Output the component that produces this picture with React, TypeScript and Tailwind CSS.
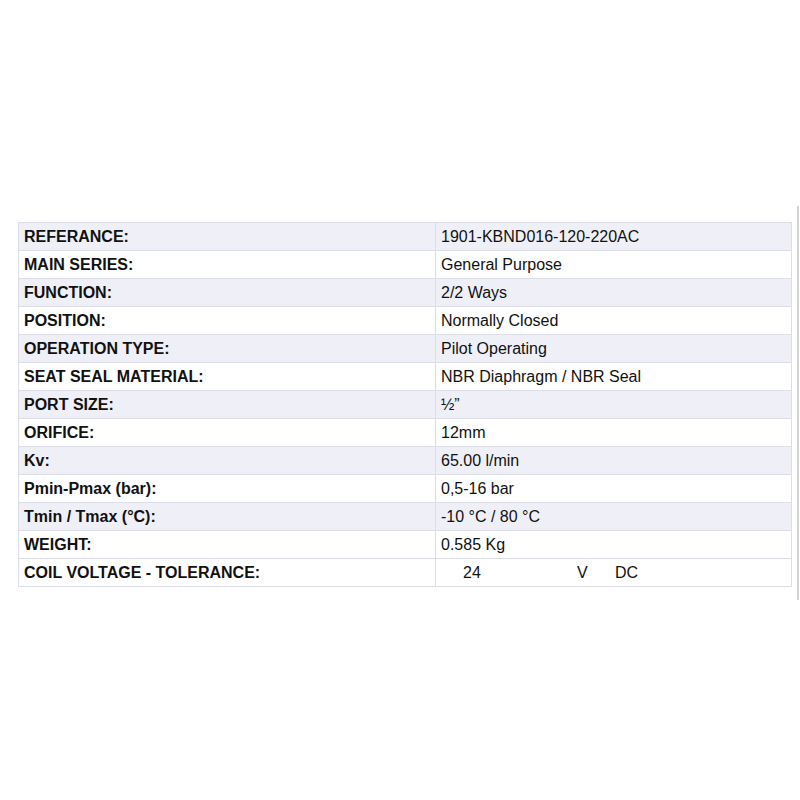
const ROWS: [string, string][] = [
  ["REFERANCE:", "1901-KBND016-120-220AC"],
  ["MAIN SERIES:", "General Purpose"],
  ["FUNCTION:", "2/2 Ways"],
  ["POSITION:", "Normally Closed"],
  ["OPERATION TYPE:", "Pilot Operating"],
  ["SEAT SEAL MATERIAL:", "NBR Diaphragm / NBR Seal"],
  ["PORT SIZE:", "½\u201D"],
  ["ORIFICE:", "12mm"],
  ["Kv:", "65.00 l/min"],
  ["Pmin-Pmax (bar):", "0,5-16 bar"],
  ["Tmin / Tmax (°C):", "-10 °C / 80 °C"],
  ["WEIGHT:", "0.585 Kg"],
];

export default function App() {
  return (
    <div className="min-h-[800px] bg-white pt-[206px]" style={{ fontFamily: "Arial, 'Liberation Sans', sans-serif" }}>
      <div className="h-[394px] w-[799px] border-r-2 border-[#d4d4d4] pl-[18px] pt-[16px]">
        <table className="w-[774px] border-collapse text-[16px] leading-[20px] text-[#111]">
          <tbody>
            {ROWS.map(([k, v], i) => (
              <tr key={k} className={i % 2 === 0 ? "bg-[#eff0f7]" : "bg-white"}>
                <td className="h-[28px] w-[417px] border border-[#dcdde6] px-[5px] font-bold">{k}</td>
                <td className="h-[28px] border border-[#dcdde6] px-[5px]">{v}</td>
              </tr>
            ))}
            <tr className="bg-white">
              <td className="h-[28px] w-[417px] border border-[#dcdde6] px-[5px] font-bold">COIL VOLTAGE - TOLERANCE:</td>
              <td className="h-[28px] border border-[#dcdde6] px-[5px]">
                <div className="flex">
                  <span className="ml-[22px] w-[114px]">24</span>
                  <span className="w-[38px]">V</span>
                  <span>DC</span>
                </div>
              </td>
            </tr>
          </tbody>
        </table>
      </div>
    </div>
  );
}
